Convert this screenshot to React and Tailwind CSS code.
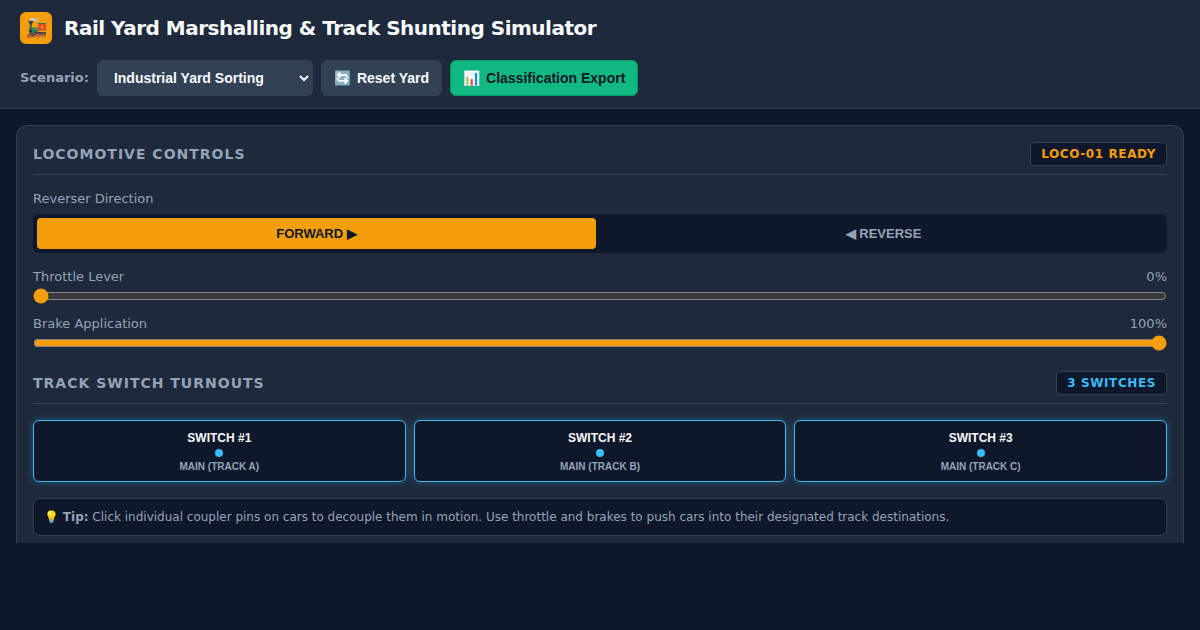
import { useState } from 'react';

const SCENARIOS = ['Industrial Yard Sorting', 'Hump Yard Classification', 'Passenger Consist Build'];

const SWITCHES = [
  { id: 1, track: 'A' },
  { id: 2, track: 'B' },
  { id: 3, track: 'C' },
];

function SectionHeader({ title, badge, badgeColor }) {
  return (
    <div className="flex items-center justify-between border-b border-[#334155] pb-2">
      <h2 className="text-sm font-bold uppercase tracking-[1px] text-[#94a3b8]">{title}</h2>
      <span className={`rounded-[4px] border border-[#334155] bg-[#0f172a] px-2.5 py-[3px] text-xs font-bold uppercase tracking-wider ${badgeColor}`}>
        {badge}
      </span>
    </div>
  );
}

function Lever({ id, label, value, onChange }) {
  return (
    <div className="flex flex-col gap-1">
      <div className="flex justify-between text-[13px] leading-[15px] text-[#94a3b8]">
        <label htmlFor={id}>{label}</label>
        <span>{value}%</span>
      </div>
      <input
        id={id}
        type="range"
        min="0"
        max="100"
        value={value}
        onChange={e => onChange(Number(e.target.value))}
        className="block h-4 w-full cursor-pointer accent-[#f59e0b]"
      />
    </div>
  );
}

export default function App() {
  const [scenario, setScenario] = useState(SCENARIOS[0]);
  const [direction, setDirection] = useState('forward');
  const [throttle, setThrottle] = useState(0);
  const [brake, setBrake] = useState(100);
  const [diverging, setDiverging] = useState({});

  const reset = () => {
    setDirection('forward');
    setThrottle(0);
    setBrake(100);
    setDiverging({});
  };

  const dirClass = d =>
    `flex-1 rounded-[4px] py-2 font-['Liberation_Sans',sans-serif] text-[13px] leading-[15px] font-bold ${direction === d ? 'bg-[#f59e0b] text-[#0f172a]' : 'text-[#94a3b8]'}`;

  return (
    <div className="min-h-screen bg-[#0f172a] font-['DejaVu_Sans',sans-serif] text-[#f8fafc]">
      <header className="flex flex-col gap-4 border-b border-[#334155] bg-[#1e293b] px-5 py-3">
        <div className="flex items-center gap-3">
          <div className="flex h-8 w-8 items-center justify-center rounded-md bg-[#f59e0b] text-lg">🚂</div>
          <h1 className="text-xl font-bold tracking-[-0.5px]">Rail Yard Marshalling &amp; Track Shunting Simulator</h1>
        </div>
        <div className="flex flex-wrap items-center gap-2">
          <label htmlFor="scenario" className="text-[13px] font-bold text-[#94a3b8]">Scenario:</label>
          <select
            id="scenario"
            value={scenario}
            onChange={e => setScenario(e.target.value)}
            className="h-9 w-[216px] rounded-md border border-[#334155] bg-[#334155] px-3 font-['Liberation_Sans',sans-serif] text-sm font-bold"
          >
            {SCENARIOS.map(s => <option key={s}>{s}</option>)}
          </select>
          <button onClick={reset} className="flex h-9 items-center gap-1.5 rounded-md border border-[#334155] bg-[#334155] px-3 font-['Liberation_Sans',sans-serif] text-sm font-bold">
            <span>🔄</span> Reset Yard
          </button>
          <button className="flex h-9 items-center gap-1.5 rounded-md border border-[#059669] bg-[#10b981] px-3 font-['Liberation_Sans',sans-serif] text-sm font-bold text-[#0f172a]">
            <span>📊</span> Classification Export
          </button>
        </div>
      </header>

      <main className="p-4">
        <div className="rounded-t-xl border border-b-0 border-[#334155] bg-[#1e293b] px-4 pt-4 pb-[7px]">
          {/* Locomotive */}
          <section>
            <SectionHeader title="Locomotive Controls" badge="LOCO-01 Ready" badgeColor="text-[#f59e0b]" />
            <div className="mt-4 text-[13px] leading-[15px] text-[#94a3b8]">Reverser Direction</div>
            <div className="mt-2 flex gap-2 rounded-md bg-[#0f172a] p-1">
              <button onClick={() => setDirection('forward')} className={dirClass('forward')}>FORWARD ▶</button>
              <button onClick={() => setDirection('reverse')} className={dirClass('reverse')}>◀ REVERSE</button>
            </div>
            <div className="mt-4 flex flex-col gap-3">
              <Lever id="throttle" label="Throttle Lever" value={throttle} onChange={setThrottle} />
              <Lever id="brake" label="Brake Application" value={brake} onChange={setBrake} />
            </div>
          </section>

          {/* Turnouts */}
          <section className="mt-5">
            <SectionHeader title="Track Switch Turnouts" badge="3 Switches" badgeColor="text-[#38bdf8]" />
            <div className="mt-4 grid grid-cols-3 gap-2">
              {SWITCHES.map(s => (
                <button
                  key={s.id}
                  onClick={() => setDiverging({ ...diverging, [s.id]: !diverging[s.id] })}
                  className="flex flex-col items-center gap-1 rounded-md border border-[#38bdf8] bg-[#0f172a] pt-2.5 pb-2 font-['Liberation_Sans',sans-serif] text-xs leading-[14px] font-bold shadow-[0_0_8px_rgba(56,189,248,0.3)]"
                >
                  <span>SWITCH #{s.id}</span>
                  <span className="h-2 w-2 rounded-full bg-[#38bdf8]" />
                  <span className="text-[10px] leading-[12px] text-[#94a3b8]">
                    {diverging[s.id] ? 'SIDING' : 'MAIN'} (TRACK {s.track})
                  </span>
                </button>
              ))}
            </div>
          </section>

          <p className="mt-4 rounded-md border border-[#334155] bg-[#0f172a] px-2.5 py-2 text-xs leading-5 text-[#94a3b8]">
            💡 <strong>Tip:</strong> Click individual coupler pins on cars to decouple them in motion. Use throttle and brakes to push cars into their designated track destinations.
          </p>
        </div>
      </main>
    </div>
  );
}
